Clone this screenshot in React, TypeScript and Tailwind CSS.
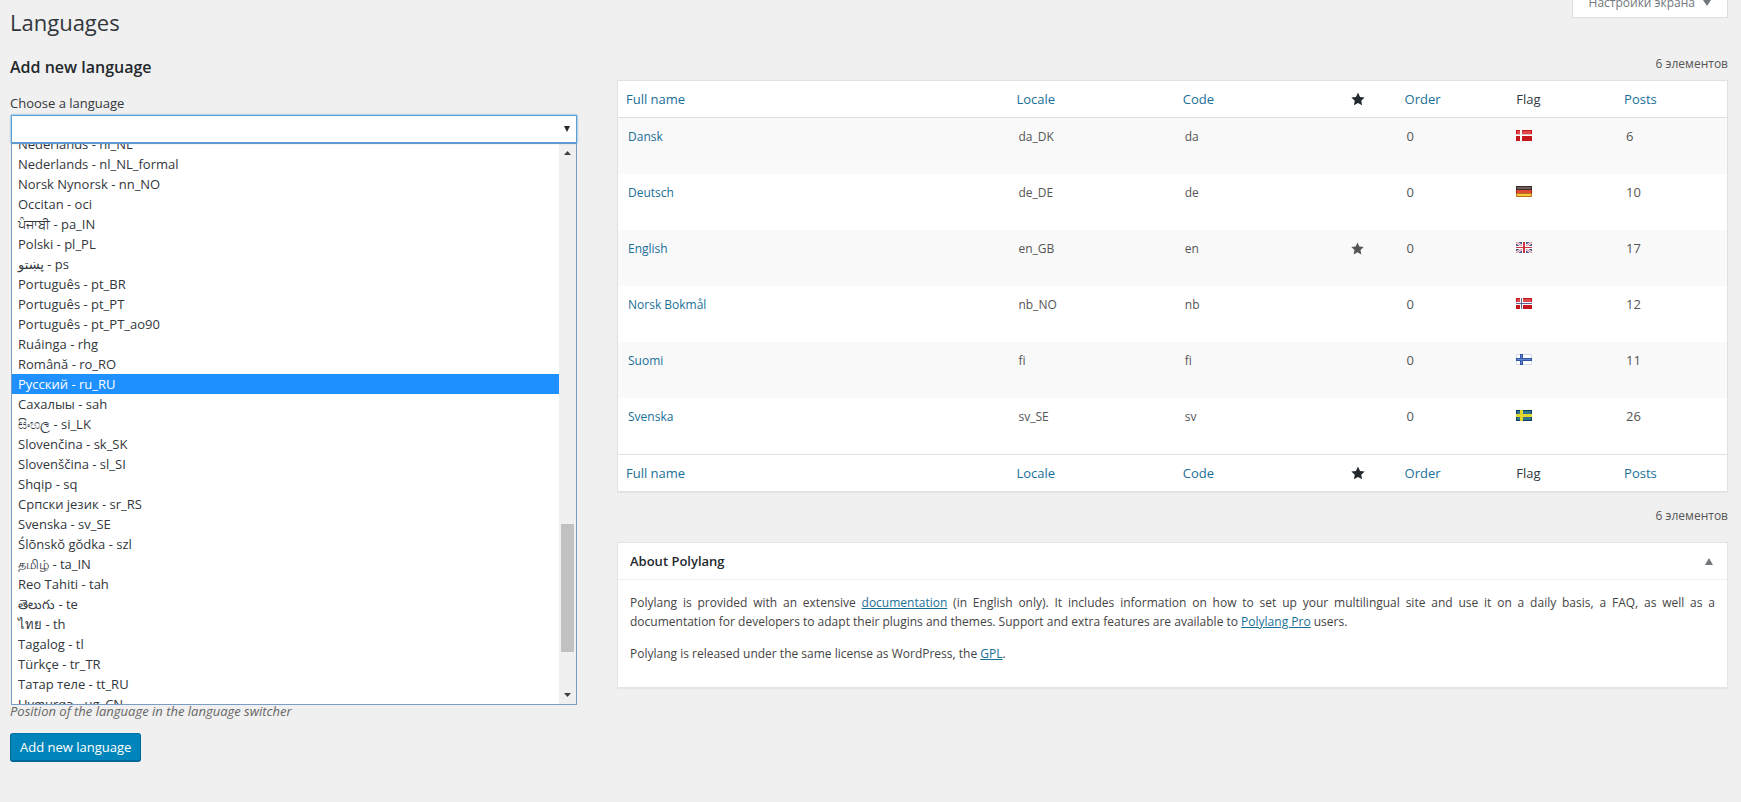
import React from "react";

type FlagCode = "dk" | "de" | "gb" | "no" | "fi" | "se";

interface Language {
  name: string;
  locale: string;
  code: string;
  isDefault?: boolean;
  order: number;
  flag: FlagCode;
  posts: number;
}

const languages: Language[] = [
  { name: "Dansk", locale: "da_DK", code: "da", order: 0, flag: "dk", posts: 6 },
  { name: "Deutsch", locale: "de_DE", code: "de", order: 0, flag: "de", posts: 10 },
  { name: "English", locale: "en_GB", code: "en", isDefault: true, order: 0, flag: "gb", posts: 17 },
  { name: "Norsk Bokmål", locale: "nb_NO", code: "nb", order: 0, flag: "no", posts: 12 },
  { name: "Suomi", locale: "fi", code: "fi", order: 0, flag: "fi", posts: 11 },
  { name: "Svenska", locale: "sv_SE", code: "sv", order: 0, flag: "se", posts: 26 },
];

const options: string[] = [
  "Nederlands - nl_NL",
  "Nederlands - nl_NL_formal",
  "Norsk Nynorsk - nn_NO",
  "Occitan - oci",
  "ਪੰਜਾਬੀ - pa_IN",
  "Polski - pl_PL",
  "پښتو - ps",
  "Português - pt_BR",
  "Português - pt_PT",
  "Português - pt_PT_ao90",
  "Ruáinga - rhg",
  "Română - ro_RO",
  "Русский - ru_RU",
  "Сахалыы - sah",
  "සිංහල - si_LK",
  "Slovenčina - sk_SK",
  "Slovenščina - sl_SI",
  "Shqip - sq",
  "Српски језик - sr_RS",
  "Svenska - sv_SE",
  "Ślōnskŏ gŏdka - szl",
  "தமிழ் - ta_IN",
  "Reo Tahiti - tah",
  "తెలుగు - te",
  "ไทย - th",
  "Tagalog - tl",
  "Türkçe - tr_TR",
  "Татар теле - tt_RU",
  "Uyƣurqə - ug_CN",
];

const highlighted = "Русский - ru_RU";

function Triangle({ up = false, className }: { up?: boolean; className: string }) {
  return (
    <svg viewBox="0 0 8 6" preserveAspectRatio="none" className={className} fill="currentColor" aria-hidden="true">
      <path d={up ? "M4 0 8 6H0Z" : "M0 0H8L4 6Z"} />
    </svg>
  );
}

function Star({ className }: { className: string }) {
  return (
    <svg viewBox="0 0 20 20" className={className} fill="currentColor" role="img" aria-label="Default language">
      <path d="m10 0.8 2.9 6.2 6.6.8-4.9 4.6 1.3 6.7L10 15.8l-5.9 3.3 1.3-6.7L.5 7.8 7.1 7Z" />
    </svg>
  );
}

function Flag({ code }: { code: FlagCode }) {
  return (
    <svg viewBox="0 0 16 11" className="block h-[11px] w-4" shapeRendering="crispEdges" role="img" aria-label={code}>
      {code === "dk" && (
        <>
          <path fill="#c4161c" d="M0 0h16v11H0z" />
          <path fill="#dc4a4f" d="M1 1h14v4H1z" />
          <path fill="#fff" d="M4 0h2v11H4zM0 5h16v1H0z" />
          <path fill="#f0b9bb" d="M0 4h4v1H0zM6 4h10v1H6z" />
        </>
      )}
      {code === "de" && (
        <>
          <path fill="#3a2a26" d="M0 0h16v4H0z" />
          <path fill="#6b605c" d="M1 1h14v2H1z" />
          <path fill="#b8180f" d="M0 4h16v4H0z" />
          <path fill="#e04a32" d="M1 4h14v3H1z" />
          <path fill="#b8741c" d="M0 7h16v4H0z" />
          <path fill="#fbc83a" d="M1 8h14v2H1z" />
        </>
      )}
      {code === "gb" && (
        <>
          <path fill="#4b5590" d="M0 0h16v11H0z" />
          <g shapeRendering="auto">
            <path stroke="#fff" strokeWidth="2.4" d="m0 0 16 11M16 0 0 11" />
            <path stroke="#d0555c" strokeWidth="0.8" d="m0 0 16 11M16 0 0 11" />
          </g>
          <path fill="#fff" d="M6 0h4v11H6zM0 4h16v3H0z" />
          <path fill="#cc3640" d="M7 0h2v11H7zM0 5h16v1H0z" />
        </>
      )}
      {code === "no" && (
        <>
          <path fill="#c4161c" d="M0 0h16v11H0z" />
          <path fill="#dc4a4f" d="M1 1h14v3H1z" />
          <path fill="#fff" d="M4 0h3v11H4zM0 4h16v3H0z" />
          <path fill="#5b6599" d="M5 0h1v11H5zM0 5h16v1H0z" />
        </>
      )}
      {code === "fi" && (
        <>
          <path fill="#d5ddea" d="M0 0h16v11H0z" />
          <path fill="#fff" d="M1 1h14v9H1z" />
          <path fill="#2f55a4" d="M4 0h3v11H4zM0 4h16v3H0z" />
          <path fill="#5c83cc" d="M5 1h1v9H5zM1 5h14v1H1z" />
        </>
      )}
      {code === "se" && (
        <>
          <path fill="#0a3f5c" d="M0 0h16v11H0z" />
          <path fill="#2f7590" d="M1 1h14v9H1z" />
          <path fill="#e3d72e" d="M4 0h3v11H4zM0 4h16v3H0z" />
        </>
      )}
    </svg>
  );
}

function HeadingRow() {
  const sortable = "block p-2 text-[13px] leading-5 text-[#1a6f98]";
  return (
    <tr>
      <th scope="col" className="p-0 font-normal">
        <a href="#name" className={sortable}>Full name</a>
      </th>
      <th scope="col" className="w-[15%] p-0 font-normal">
        <a href="#locale" className={sortable}>Locale</a>
      </th>
      <th scope="col" className="w-[15%] p-0 font-normal">
        <a href="#code" className={sortable}>Code</a>
      </th>
      <th scope="col" className="w-[5%] p-0 font-normal">
        <a href="#default" className="block px-2.5 py-2 text-[#23282d]">
          <Star className="size-3.5" />
        </a>
      </th>
      <th scope="col" className="w-[9.9%] p-0 font-normal">
        <a href="#order" className={sortable}>Order</a>
      </th>
      <th scope="col" className="w-[9.9%] px-2.5 py-2 text-[13px] leading-5 font-normal text-[#32373c]">
        Flag
      </th>
      <th scope="col" className="w-[10%] p-0 font-normal">
        <a href="#posts" className={sortable}>Posts</a>
      </th>
    </tr>
  );
}

function LanguageTable() {
  return (
    <table className="w-full table-fixed border-separate border-spacing-0 border border-[#e1e1e1] bg-white text-left shadow-[0_1px_1px_rgba(0,0,0,0.04)]">
      <thead className="[&_th]:border-b [&_th]:border-[#e1e1e1]">
        <HeadingRow />
      </thead>
      <tbody className="text-xs leading-5 text-[#555]">
        {languages.map((lang) => (
          <tr key={lang.locale} className="h-14 align-top odd:bg-[#f9f9f9]">
            <td className="px-2.5 py-[9px]">
              <a href={`#${lang.code}`} className="text-[#1a6f98]">{lang.name}</a>
            </td>
            <td className="px-2.5 py-[9px]">{lang.locale}</td>
            <td className="px-2.5 py-[9px]">{lang.code}</td>
            <td className="px-2.5 py-3">{lang.isDefault && <Star className="block size-[13px]" />}</td>
            <td className="px-2.5 py-2 text-[13px]">{lang.order}</td>
            <td className="px-2.5 py-3">
              <Flag code={lang.flag} />
            </td>
            <td className="px-2.5 py-2 text-[13px]">{lang.posts}</td>
          </tr>
        ))}
      </tbody>
      <tfoot className="[&_th]:border-t [&_th]:border-[#e1e1e1]">
        <HeadingRow />
      </tfoot>
    </table>
  );
}

function LanguageForm() {
  return (
    <form className="flex flex-col items-start pt-px" onSubmit={(e) => e.preventDefault()}>
      <h2 className="text-base leading-6 font-semibold text-[#23282d]">Add new language</h2>
      <label htmlFor="lang-list" className="mt-3.5 text-[13px] leading-5 text-[#32373c]">
        Choose a language
      </label>
      <div className="mt-0.5 w-full px-px">
        <div className="relative">
          <select
            id="lang-list"
            className="block h-7 w-full appearance-none border border-[#5b9dd9] bg-white shadow-[0_0_2px_rgba(30,140,190,0.8)] outline-none"
          >
            <option value=""></option>
          </select>
          <Triangle className="pointer-events-none absolute top-[11px] right-[7px] h-1.5 w-1.5 text-[#23282d]" />
        </div>
        <div className="flex h-[562px] border border-[#7a9cc6] bg-white">
          <ul role="listbox" aria-label="Languages" className="min-w-0 flex-1 overflow-hidden text-[13px] text-[#32373c]">
            {options.map((option) => (
              <li
                key={option}
                role="option"
                aria-selected={option === highlighted}
                className="h-5 px-1.5 leading-5 whitespace-nowrap first:-mt-2.5 aria-selected:bg-[#1e90ff] aria-selected:text-white"
              >
                {option}
              </li>
            ))}
          </ul>
          <div className="flex w-[17px] shrink-0 flex-col items-center bg-[#f0f0f0] py-[7px] text-[#404040]" aria-hidden="true">
            <Triangle up className="h-1 w-[7px]" />
            <div className="mt-[369px] h-32 w-[13px] bg-[#c1c1c1]" />
            <Triangle className="mt-auto h-1 w-[7px]" />
          </div>
        </div>
      </div>
      <p className="text-[13px] leading-3 text-[#666] italic">Position of the language in the language switcher</p>
      <button
        type="submit"
        className="mt-4 h-7 rounded-[3px] border border-[#006799] border-t-[#0073aa] bg-[#0085ba] px-[9px] text-[13px] leading-6 text-white shadow-[0_1px_0_#006799]"
      >
        Add new language
      </button>
    </form>
  );
}

function AboutBox() {
  const link = "text-[#1a6f98] underline";
  return (
    <section className="border border-[#e5e5e5] bg-white shadow-[0_1px_1px_rgba(0,0,0,0.04)]">
      <header className="flex items-center justify-between border-b border-[#eee] py-2 pr-3.5 pl-3">
        <h2 className="text-[13px] leading-5 font-semibold text-[#23282d]">About Polylang</h2>
        <button type="button" aria-label="Toggle panel" className="text-[#72777c]">
          <Triangle up className="h-[7px] w-2" />
        </button>
      </header>
      <div className="px-3 pt-[13px] pb-6 text-xs leading-[19px] text-[#444]">
        <p className="text-justify">
          Polylang is provided with an extensive <a href="#documentation" className={link}>documentation</a> (in English
          only). It includes information on how to set up your multilingual site and use it on a daily basis, a FAQ, as
          well as a <span className="whitespace-nowrap">documentation for developers</span> to adapt their plugins and
          themes. Support and extra features are available to <a href="#pro" className={link}>Polylang Pro</a> users.
        </p>
        <p className="mt-[13px]">
          Polylang is released under the same license as WordPress, the <a href="#gpl" className={link}>GPL</a>.
        </p>
      </div>
    </section>
  );
}

export default function App() {
  return (
    <div className="min-h-screen bg-[#f0f0f0] pr-[13px] pl-2.5 font-['Open_Sans','Noto_Sans','DejaVu_Sans',sans-serif] text-[#444]">
      <div className="flex items-start justify-between">
        <h1 className="pt-[7px] pb-px text-[22px] leading-[30px] text-[#32373c]">Languages</h1>
        <button
          type="button"
          className="-mt-[7px] flex items-center gap-2 border border-t-0 border-[#ddd] bg-white px-4 pb-1 text-xs leading-5 text-[#72777c]"
        >
          Настройки экрана
          <Triangle className="h-1.5 w-2" />
        </button>
      </div>
      <main className="mt-4 grid grid-cols-[minmax(0,568fr)_minmax(0,1111fr)] gap-[39px]">
        <LanguageForm />
        <div>
          <p className="text-right text-xs leading-5 text-[#555]">6 элементов</p>
          <div className="mt-1.5">
            <LanguageTable />
          </div>
          <p className="mt-3.5 mb-4 text-right text-xs leading-5 text-[#555]">6 элементов</p>
          <AboutBox />
        </div>
      </main>
    </div>
  );
}
